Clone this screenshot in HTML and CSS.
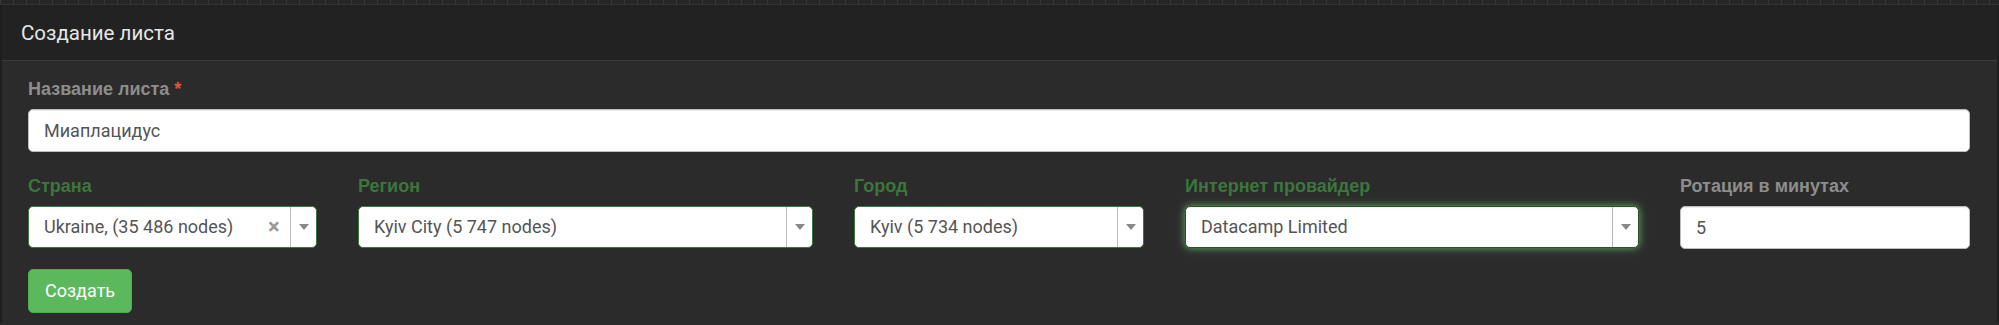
FILE: index.html
```html
<!DOCTYPE html>
<html lang="ru">
<head>
<meta charset="utf-8">
<title>Создание листа</title>
<link rel="stylesheet" href="styles.css">
</head>
<body>
<div class="topstrip"></div>
<div class="panel">
  <div class="panel-heading">
    <h3 class="panel-title">Создание листа</h3>
  </div>
  <div class="panel-body">
    <div class="form-group first">
      <label class="label">Название листа <span class="req">*</span></label>
      <div class="input">Миаплацидус</div>
    </div>
    <div class="row">
      <div class="col">
        <label class="label success">Страна</label>
        <div class="select">
          <span class="select-text">Ukraine, (35 486 nodes)</span>
          <span class="select-clear">×</span>
          <span class="select-arrow"><span class="tri"></span></span>
        </div>
      </div>
      <div class="col">
        <label class="label success">Регион</label>
        <div class="select">
          <span class="select-text">Kyiv City (5 747 nodes)</span>
          <span class="select-arrow"><span class="tri"></span></span>
        </div>
      </div>
      <div class="col">
        <label class="label success">Город</label>
        <div class="select">
          <span class="select-text">Kyiv (5 734 nodes)</span>
          <span class="select-arrow"><span class="tri"></span></span>
        </div>
      </div>
      <div class="col">
        <label class="label success">Интернет провайдер</label>
        <div class="select focus">
          <span class="select-text">Datacamp Limited</span>
          <span class="select-arrow"><span class="tri"></span></span>
        </div>
      </div>
      <div class="col">
        <label class="label">Ротация в минутах</label>
        <div class="input">5</div>
      </div>
    </div>
    <button class="btn">Создать</button>
  </div>
</div>
</body>
</html>
```
FILE: styles.css
```css
html, body {
  margin: 0;
  padding: 0;
  background: #2b2b2b;
  font-family: Roboto, "Liberation Sans", Arial, sans-serif;
}
.topstrip {
  height: 4px;
  background: repeating-linear-gradient(90deg, #3a3a3a 0 1px, #262626 1px 13px);
  border-bottom: 1px solid #333;
}
.panel {
  border-left: 2px solid #1e1e1e;
  border-right: 2px solid #1e1e1e;
  background: #2b2b2b;
}
.panel-heading {
  background: #222;
  height: 55px;
  border-bottom: 1px solid #3a3a3a;
  padding: 0 19px;
  display: flex;
  align-items: center;
}
.panel-title {
  margin: 0;
  font-size: 20.5px;
  font-weight: 400;
  color: #e6e6e6;
  line-height: 25px;
  padding-top: 2px;
}
.panel-body {
  padding: 16px 27px 10px 26px;
}
.form-group {
  display: flex;
  flex-direction: column;
}
.label {
  display: block;
  font-family: "Liberation Sans", Arial, sans-serif;
  font-size: 18px;
  font-weight: 700;
  line-height: 25px;
  color: #8d8d8d;
  margin-bottom: 7px;
}
.label.success {
  color: #3c763d;
}
.req {
  color: #e5533d;
}
.input {
  height: 43px;
  box-sizing: border-box;
  background: #fff;
  border: 1px solid #bdbdbd;
  border-radius: 5px;
  padding: 0 15px;
  line-height: 41px;
  font-size: 18px;
  color: #555;
  box-shadow: inset 0 1px 1px rgba(0,0,0,.075);
}
.row {
  display: grid;
  grid-template-columns: 289px 455px 290px 454px 1fr;
  column-gap: 41px;
  margin-top: 22px;
}
.col {
  display: flex;
  flex-direction: column;
}
.select {
  height: 42px;
  box-sizing: border-box;
  background: #fff;
  border: 1px solid #3c763d;
  border-radius: 5px;
  display: flex;
  align-items: stretch;
  font-size: 18px;
  color: #555;
}
.select.focus {
  border-color: #2b542c;
  box-shadow: inset 0 1px 1px rgba(0,0,0,.075), 0 0 8px #67b168;
}
.select-text {
  flex: 1;
  padding-left: 15px;
  line-height: 40px;
  white-space: nowrap;
  overflow: hidden;
}
.select-clear {
  width: 22px;
  display: flex;
  align-items: center;
  justify-content: flex-start;
  font-size: 22px;
  font-weight: 700;
  color: #999;
  line-height: 1;
  padding-bottom: 1px;
}
.select-arrow {
  width: 25px;
  border-left: 1px solid #bbb;
  display: flex;
  align-items: center;
  justify-content: center;
}
.tri {
  width: 0;
  height: 0;
  border-left: 5px solid transparent;
  border-right: 5px solid transparent;
  border-top: 6px solid #888;
}
.btn {
  margin-top: 20px;
  height: 44px;
  padding: 0 16px;
  background: #5cb85c;
  border: 1px solid #4cae4c;
  border-radius: 5px;
  color: #fff;
  font-family: Roboto, "Liberation Sans", Arial, sans-serif;
  font-size: 18px;
  line-height: 42px;
  cursor: pointer;
}
```
